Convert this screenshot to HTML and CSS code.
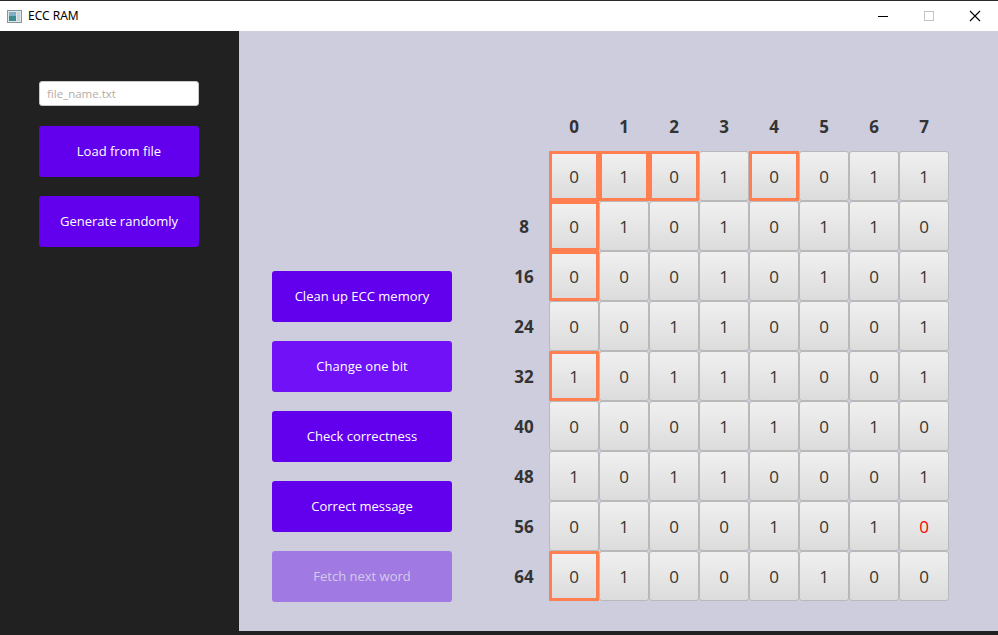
FILE: index.html
```html
<!DOCTYPE html>
<html>
<head>
<meta charset="utf-8">
<link rel="stylesheet" href="styles.css">
</head>
<body>
<div class="window">
  <div class="titlebar">
    <svg class="app-icon" width="15" height="13" viewBox="0 0 15 13">
      <rect x="0.5" y="0.5" width="14" height="12" fill="#dfe6ea" stroke="#8a969c"/>
      <rect x="2" y="2" width="7" height="9" fill="#3f8a8c"/>
      <rect x="2" y="2" width="7" height="4" fill="#7fb0c8"/>
      <rect x="10" y="2" width="3" height="9" fill="#c9d3d8"/>
    </svg>
    <span class="title">ECC RAM</span>
    <div class="controls">
      <svg width="46" height="30" viewBox="0 0 46 30"><line x1="18" y1="15.5" x2="28" y2="15.5" stroke="#000" stroke-width="1"/></svg>
      <svg width="46" height="30" viewBox="0 0 46 30"><rect x="18.5" y="10.5" width="9" height="9" fill="none" stroke="#c4c4c4" stroke-width="1"/></svg>
      <svg width="46" height="30" viewBox="0 0 46 30"><path d="M18 10 L28 20 M28 10 L18 20" stroke="#000" stroke-width="1.1"/></svg>
    </div>
  </div>
  <div class="main">
    <div class="sidebar">
      <input class="file-input" type="text" placeholder="file_name.txt">
      <button class="btn">Load from file</button>
      <button class="btn">Generate randomly</button>
    </div>
    <div class="content">
      <div class="actions">
        <button class="btn">Clean up ECC memory</button>
        <button class="btn btn-hover">Change one bit</button>
        <button class="btn">Check correctness</button>
        <button class="btn">Correct message</button>
        <button class="btn btn-disabled">Fetch next word</button>
      </div>
      <div class="grid" id="grid">
        <div class="hdr"></div>
        <div class="hdr">0</div><div class="hdr">1</div><div class="hdr">2</div><div class="hdr">3</div>
        <div class="hdr">4</div><div class="hdr">5</div><div class="hdr">6</div><div class="hdr">7</div>

        <div class="lbl"></div>
        <div class="cell mark">0</div><div class="cell mark">1</div><div class="cell mark">0</div><div class="cell">1</div>
        <div class="cell mark">0</div><div class="cell">0</div><div class="cell">1</div><div class="cell">1</div>

        <div class="lbl">8</div>
        <div class="cell mark">0</div><div class="cell">1</div><div class="cell">0</div><div class="cell">1</div>
        <div class="cell">0</div><div class="cell">1</div><div class="cell">1</div><div class="cell">0</div>

        <div class="lbl">16</div>
        <div class="cell mark">0</div><div class="cell">0</div><div class="cell">0</div><div class="cell">1</div>
        <div class="cell">0</div><div class="cell">1</div><div class="cell">0</div><div class="cell">1</div>

        <div class="lbl">24</div>
        <div class="cell">0</div><div class="cell">0</div><div class="cell">1</div><div class="cell">1</div>
        <div class="cell">0</div><div class="cell">0</div><div class="cell">0</div><div class="cell">1</div>

        <div class="lbl">32</div>
        <div class="cell mark">1</div><div class="cell">0</div><div class="cell">1</div><div class="cell">1</div>
        <div class="cell">1</div><div class="cell">0</div><div class="cell">0</div><div class="cell">1</div>

        <div class="lbl">40</div>
        <div class="cell">0</div><div class="cell">0</div><div class="cell">0</div><div class="cell">1</div>
        <div class="cell">1</div><div class="cell">0</div><div class="cell">1</div><div class="cell">0</div>

        <div class="lbl">48</div>
        <div class="cell">1</div><div class="cell">0</div><div class="cell">1</div><div class="cell">1</div>
        <div class="cell">0</div><div class="cell">0</div><div class="cell">0</div><div class="cell">1</div>

        <div class="lbl">56</div>
        <div class="cell">0</div><div class="cell">1</div><div class="cell">0</div><div class="cell">0</div>
        <div class="cell">1</div><div class="cell">0</div><div class="cell">1</div><div class="cell err">0</div>

        <div class="lbl">64</div>
        <div class="cell mark">0</div><div class="cell">1</div><div class="cell">0</div><div class="cell">0</div>
        <div class="cell">0</div><div class="cell">1</div><div class="cell">0</div><div class="cell">0</div>
      </div>
    </div>
  </div>
  <div class="bottom"></div>
</div>
</body>
</html>
```

FILE: styles.css
```css
* { box-sizing: border-box; }
html, body { margin: 0; padding: 0; }
body {
  width: 998px;
  height: 635px;
  overflow: hidden;
  font-family: "Open Sans", "Noto Sans", sans-serif;
  background: #212121;
}
.window { display: flex; flex-direction: column; height: 635px; }
.titlebar {
  height: 31px;
  background: #fff;
  border-top: 1px solid #2a2a2a;
  display: flex;
  align-items: center;
  padding-left: 7px;
  flex: none;
}
.app-icon { margin-right: 6px; }
.title {
  font-family: "Noto Sans", "Open Sans", sans-serif;
  font-size: 12px;
  color: #000;
  margin-top: -1px;
}
.controls { margin-left: auto; display: flex; align-items: center; }
.controls svg { display: block; }
.main { display: flex; height: 600px; flex: none; }
.sidebar {
  width: 239px;
  background: #212121;
  padding: 50px 0 0 39px;
  display: flex;
  flex-direction: column;
  align-items: flex-start;
}
.file-input {
  width: 160px;
  height: 25px;
  border: 1px solid #c8c8c8;
  border-radius: 3px;
  background: #fff;
  padding: 0 7px;
  font-family: "Open Sans", sans-serif;
  font-size: 11.5px;
  color: #333;
  outline: none;
  margin-bottom: 20px;
}
.file-input::placeholder { color: #b6aca4; }
.btn {
  width: 160px;
  height: 51px;
  border: none;
  border-radius: 3px;
  background: #6200ee;
  color: #fff;
  font-family: "Open Sans", sans-serif;
  font-size: 13px;
  padding: 0 0 2px 0;
  margin-bottom: 19px;
}
.content {
  flex: 1;
  background: #cecddd;
  display: flex;
  align-items: flex-start;
  padding-left: 33px;
}
.actions {
  margin-top: 240px;
  display: flex;
  flex-direction: column;
}
.actions .btn { width: 180px; }
.btn-hover { background: #7111f7; }
.btn-disabled { background: #a07ae2; color: #d3cbe9; }
.grid {
  margin-top: 70px;
  margin-left: 47px;
  display: grid;
  grid-template-columns: repeat(9, 50px);
  grid-auto-rows: 50px;
}
.hdr, .lbl {
  display: flex;
  align-items: center;
  justify-content: center;
  font-weight: 700;
  font-size: 17px;
  color: #333;
}
.cell {
  display: flex;
  align-items: center;
  justify-content: center;
  border: 1px solid #b9b9b9;
  border-radius: 3px;
  background: linear-gradient(#f0f0f0, #dcdcdc);
  font-size: 17px;
  color: #3a3530;
  font-weight: 400;
}
.cell.mark {
  border: 3px solid #ff7f50;
  border-radius: 0;
}
.cell.err { color: #ff0000; }
.bottom { flex: 1; background: #212121; }
```
